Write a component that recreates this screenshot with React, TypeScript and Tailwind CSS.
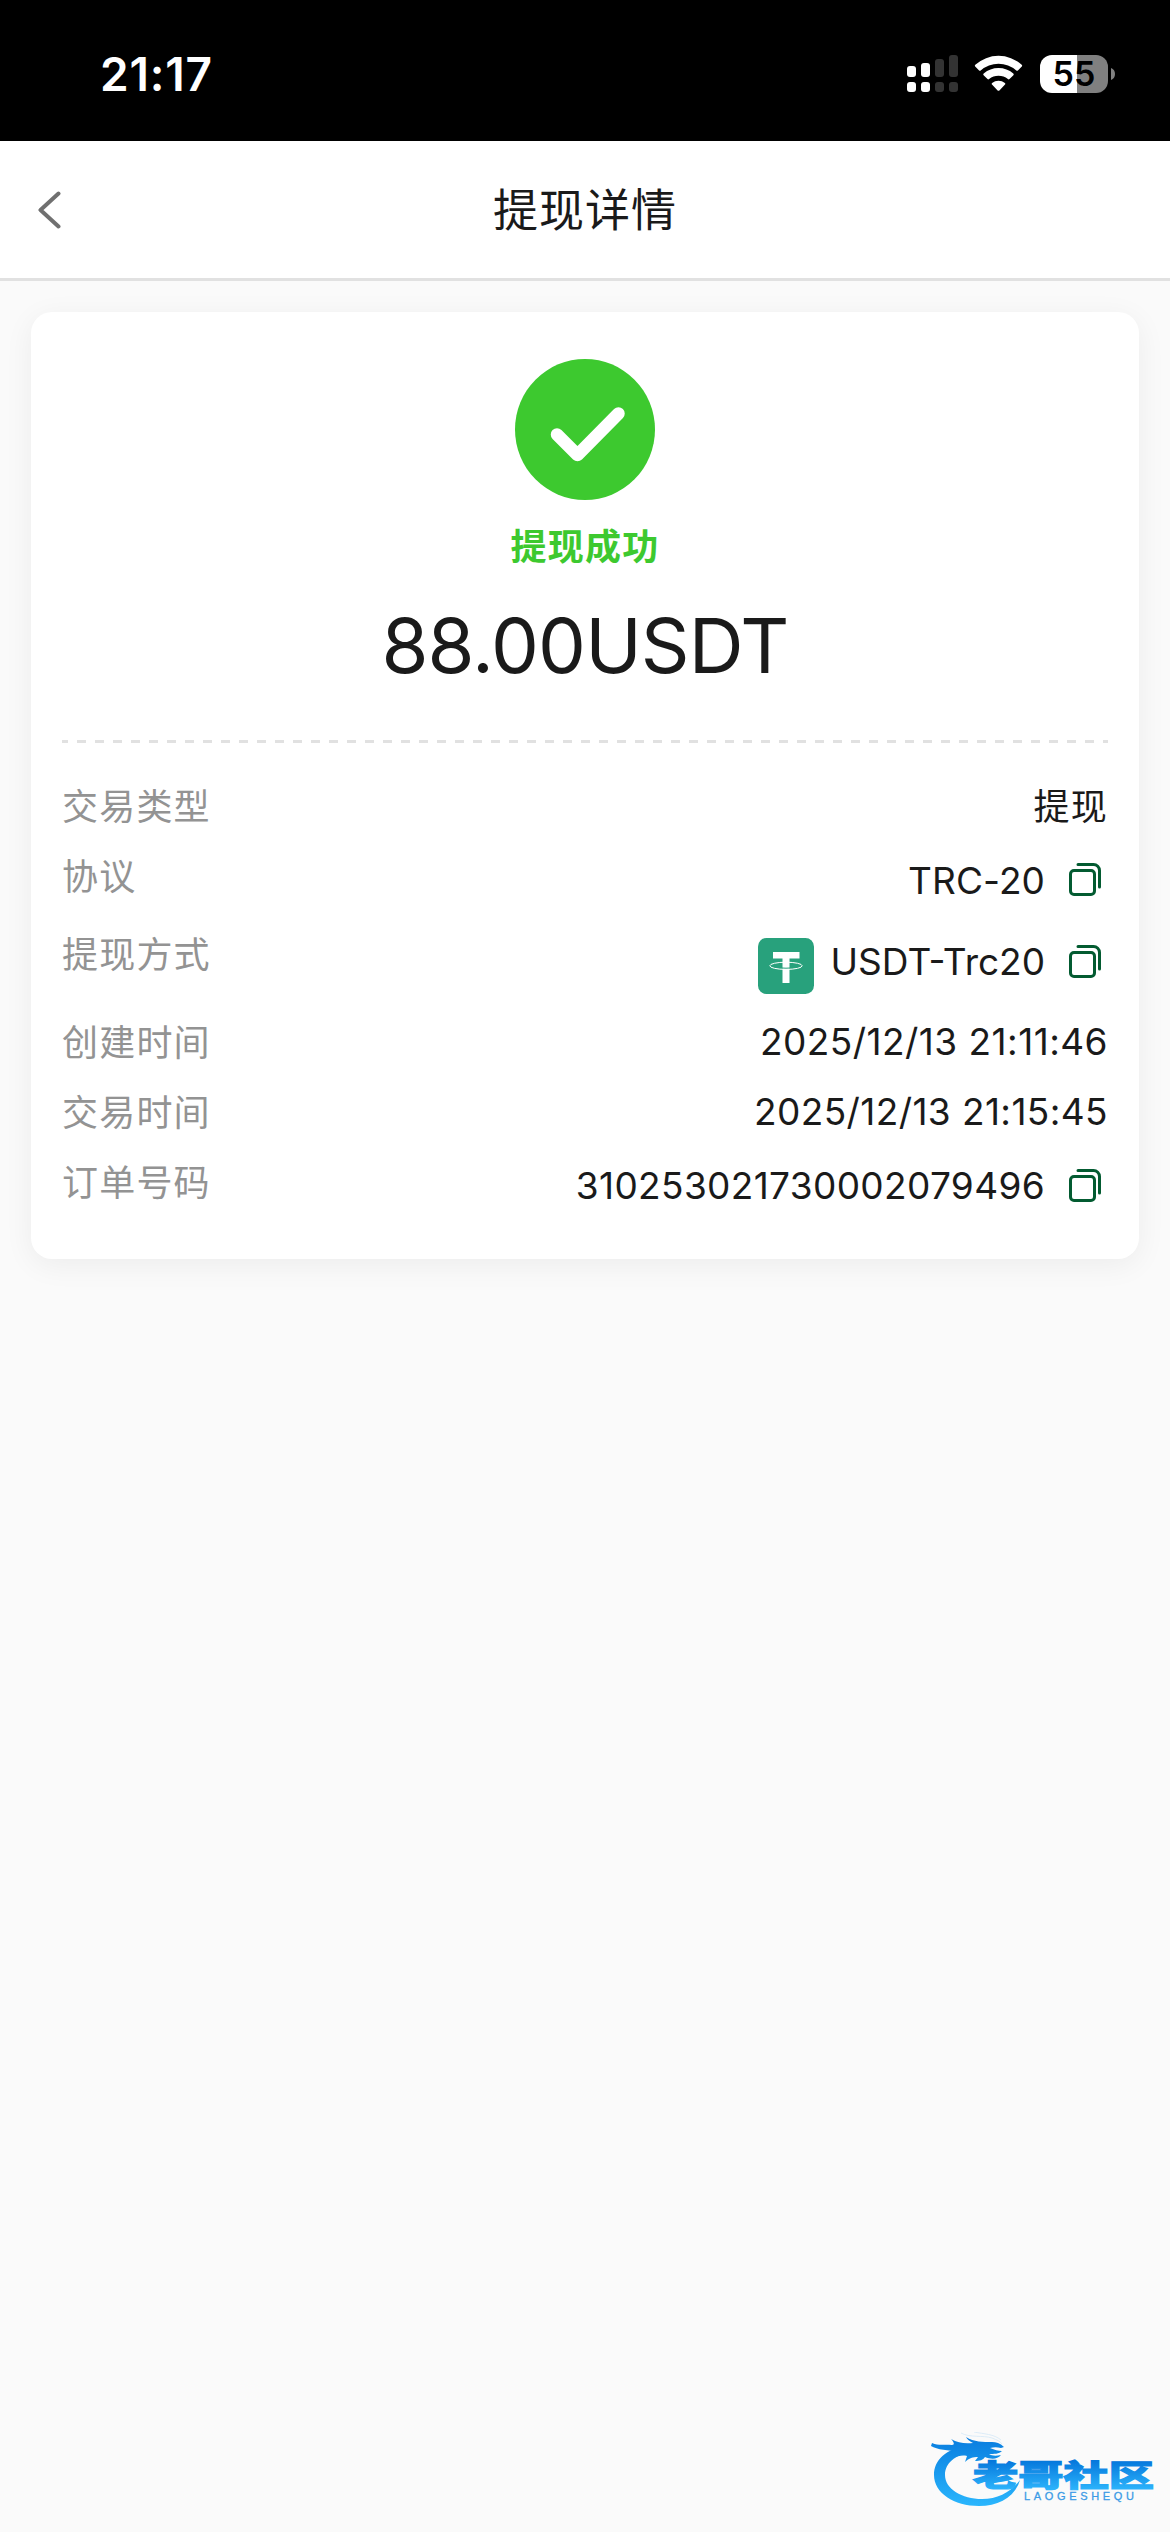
import React from 'react';

type DetailRow = {
    label: string;
    value: string;
    rowClass: string;
    valueClass: string;
    copy?: boolean;
    coin?: boolean;
};

const rows: DetailRow[] = [
    { label: '交易类型', value: '提现', rowClass: 'h-[70px]', valueClass: 'text-[36px] tracking-[1.2px] h-[72px]' },
    { label: '协议', value: 'TRC-20', rowClass: 'h-[78px]', valueClass: 'text-[37px] tracking-[0.1px] h-[79px]', copy: true },
    { label: '提现方式', value: 'USDT-Trc20', rowClass: 'h-[88px]', valueClass: 'text-[37px] tracking-[0px] h-[86px]', copy: true, coin: true },
    { label: '创建时间', value: '2025/12/13 21:11:46', rowClass: 'h-[70px]', valueClass: 'text-[37px] tracking-[0.45px] h-[70px]' },
    { label: '交易时间', value: '2025/12/13 21:15:45', rowClass: 'h-[70px]', valueClass: 'text-[37px] tracking-[0.4px] h-[70px]' },
    { label: '订单号码', value: '310253021730002079496', rowClass: 'h-[76px]', valueClass: 'text-[37px] tracking-[0.35px] h-[78px]', copy: true },
];

const SignalIcon: React.FC = () => (
    <svg width="52" height="38" viewBox="0 0 52 38">
        <g fill="#fff">
            <rect x="0" y="11" width="9" height="11" rx="3" />
            <rect x="14" y="8" width="9" height="14" rx="3" />
            <rect x="0" y="27" width="9" height="10" rx="3" />
            <rect x="14" y="27" width="9" height="10" rx="3" />
        </g>
        <g fill="#333">
            <rect x="28" y="4" width="9" height="18" rx="3" />
            <rect x="42" y="0" width="9" height="22" rx="3" />
            <rect x="28" y="27" width="9" height="10" rx="3" />
            <rect x="42" y="27" width="9" height="10" rx="3" />
        </g>
    </svg>
);

const WifiIcon: React.FC = () => (
    <svg width="50" height="38" viewBox="0 0 50 38" fill="#fff">
        <path d="M1.3 9.8a34.5 34.5 0 0 1 46.4 0c.6.5.6 1.2.1 1.7l-3.9 3.9c-.5.5-1.1.5-1.6 0a27 27 0 0 0-35.6 0c-.5.5-1.1.5-1.6 0l-3.9-3.9c-.5-.5-.5-1.2.1-1.7z" />
        <path d="M9.7 18.5a22.5 22.5 0 0 1 29.6 0c.6.5.6 1.2.1 1.7l-3.9 3.9c-.5.5-1.1.5-1.6 0a15 15 0 0 0-18.8 0c-.5.5-1.1.5-1.6 0l-3.9-3.9c-.5-.5-.5-1.2.1-1.7z" />
        <path d="M18.1 27.9a10.5 10.5 0 0 1 12.8 0c.6.5.6 1.1.1 1.6l-5.6 5.9c-.6.6-1.2.6-1.8 0L18 29.5c-.5-.5-.5-1.1.1-1.6z" />
    </svg>
);

const Battery: React.FC = () => (
    <div className="flex items-center">
        <div className="flex h-[38px] w-[68px] items-center justify-center rounded-[12px] bg-[linear-gradient(90deg,#fff_54.5%,#808080_54.5%)] text-[34px] leading-none font-semibold text-black">
            55
        </div>
        <svg className="ml-[3px]" width="4" height="12" viewBox="0 0 4 12">
            <path d="M0 0c2.6 1 4 3.3 4 6s-1.4 5-4 6z" fill="#808080" />
        </svg>
    </div>
);

const CopyIcon: React.FC = () => (
    <svg width="32" height="33" viewBox="0 0 32 33" fill="none" stroke="#035b31" strokeWidth="3" strokeLinecap="round">
        <rect x="1.5" y="7.5" width="24" height="24" rx="3.5" />
        <path d="M9 1.5h15.5a6 6 0 0 1 6 6V24" />
    </svg>
);

const TetherIcon: React.FC = () => (
    <svg width="56" height="56" viewBox="0 0 56 56">
        <rect width="56" height="56" rx="8.5" fill="#28a17c" />
        <path d="M15 14h26.5v6.5H31.5V45h-7V20.5H15z" fill="#fff" />
        <ellipse cx="28" cy="27.8" rx="16.2" ry="3.6" fill="none" stroke="#fff" strokeWidth="1" />
        <path d="M24 30q4 .4 8 0" fill="none" stroke="#28a17c" strokeWidth="1" />
    </svg>
);

// Dragon ring with the community name on top of it
const CommunityLogo: React.FC = () => (
    <svg width="240" height="84" viewBox="0 0 240 84">
        <defs>
            <linearGradient id="ring" x1="0" y1="8" x2="0" y2="74" gradientUnits="userSpaceOnUse">
                <stop offset="0" stopColor="#0a7fe0" />
                <stop offset="1" stopColor="#2ab6fd" />
            </linearGradient>
            <linearGradient id="name" x1="0" y1="29" x2="0" y2="57" gradientUnits="userSpaceOnUse">
                <stop offset="0" stopColor="#0678dc" />
                <stop offset="1" stopColor="#2bb2fb" />
            </linearGradient>
        </defs>
        <path
            d="M36 14C16 17 4 28 4 43c0 18 20 31 45 31 20 0 36-9 41-26-9 12-22 19-38 19-20 0-37-10-37-24 0-12 10-20 26-23z"
            fill="url(#ring)"
        />
        <path
            d="M2 11c7 3 12 1 20 2 3 0 2-3-1-6 7 4 14 5 22 4-4-2-6-4-7-6 8 5 17 5 26 5 4 0 8 1 12 5l-3 1c-4-1-7-1-11 0 5 2 8 3 12 3-3 3-8 3-13 3 3 2 7 2 12 1-4 5-11 4-16 2-2 3-5 4-10 4l3-4c-5 0-9 1-13 5l2-6c-5-1-9 0-14 2l5-6c-9-2-21-2-27-6z"
            fill="url(#ring)"
        />
        <path d="M31 1c9 5 22 2 31 5 5 2 8 3 10 6M44 0c10 2 20 2 27 8" fill="none" stroke="#cfe5f7" strokeWidth=".7" />
        <text
            x="43"
            y="54"
            textLength="181"
            lengthAdjust="spacingAndGlyphs"
            className="font-['Noto_Sans_CJK_SC',sans-serif] text-[30px] font-black"
            fill="url(#name)"
            stroke="url(#name)"
            strokeWidth="1.2"
        >
            老哥社区
        </text>
        <text
            x="94"
            y="68"
            textLength="110"
            className="font-['Liberation_Sans',sans-serif] text-[11px]"
            fill="#3b9be6"
            stroke="#3b9be6"
            strokeWidth=".3"
        >
            LAOGESHEQU
        </text>
    </svg>
);

const App: React.FC = () => {
    return (
        <div className="flex h-[2532px] w-[1170px] flex-col bg-[#fafafa] font-['Inter','Noto_Sans_CJK_SC',sans-serif] text-[#1a1a1a]">
            {/* Status bar */}
            <div className="flex h-[141px] items-start justify-between bg-black pr-[55px] pl-[100px] text-white">
                <div className="mt-[46px] text-[46px] leading-[56px] font-semibold tracking-[0.8px]">21:17</div>
                <div className="mt-[55px] flex items-center">
                    <SignalIcon />
                    <div className="ml-[15px]">
                        <WifiIcon />
                    </div>
                    <div className="ml-[16px]">
                        <Battery />
                    </div>
                </div>
            </div>

            {/* Title bar */}
            <header className="flex h-[140px] items-center border-b-[3px] border-[#e1e1e1] bg-white px-[38px]">
                <svg width="23" height="38" viewBox="0 0 23 38" fill="none" stroke="#707070" strokeWidth="4" strokeLinecap="round" strokeLinejoin="round">
                    <path d="M20.5 2.5L2.5 19l18 16.5" />
                </svg>
                <h1 className="flex-1 pt-[3px] pr-[23px] text-center text-[45px] leading-[64px] tracking-[1px]">提现详情</h1>
            </header>

            {/* Withdrawal card */}
            <main className="mx-[31px] mt-[31px] h-[947px] rounded-[21px] bg-white px-[31px] shadow-[0_6px_30px_rgba(0,0,0,0.06)]">
                <div className="flex flex-col items-center pt-[47px]">
                    <svg width="140" height="141" viewBox="0 0 140 141">
                        <ellipse cx="70" cy="70.5" rx="70" ry="70.5" fill="#3dc92f" />
                        <path d="M42 75.5l20.5 20.5L103.5 54.5" fill="none" stroke="#fff" strokeWidth="12.5" strokeLinecap="round" strokeLinejoin="round" />
                    </svg>
                    <p className="mt-[21px] text-[36px] leading-[52px] font-bold tracking-[1.2px] text-[#3dc92f]">提现成功</p>
                    <p className="mt-[24px] text-[76px] leading-[96px] tracking-[-0.9px]">88.00USDT</p>
                </div>

                <svg className="mt-[47px] block" width="1046" height="3" viewBox="0 0 1046 3">
                    <path d="M-3 1.5H1046" stroke="#e1e1e1" strokeWidth="3" strokeDasharray="9 9" />
                </svg>

                <div className="mt-[28px] text-[36px]">
                    {rows.map((row) => (
                        <div key={row.label} className={`flex items-start justify-between ${row.rowClass}`}>
                            <span className="leading-[72px] tracking-[1.2px] text-[#939393]">{row.label}</span>
                            <div className={`flex items-center ${row.valueClass}`}>
                                {row.coin && (
                                    <span className="mt-[8px] mr-[17px]">
                                        <TetherIcon />
                                    </span>
                                )}
                                <span>{row.value}</span>
                                {row.copy && (
                                    <span className="mr-[7px] mb-[2px] ml-[24px]">
                                        <CopyIcon />
                                    </span>
                                )}
                            </div>
                        </div>
                    ))}
                </div>
            </main>

            <footer className="mt-auto mb-[16px] flex justify-end">
                <CommunityLogo />
            </footer>
        </div>
    );
};

export default App;
